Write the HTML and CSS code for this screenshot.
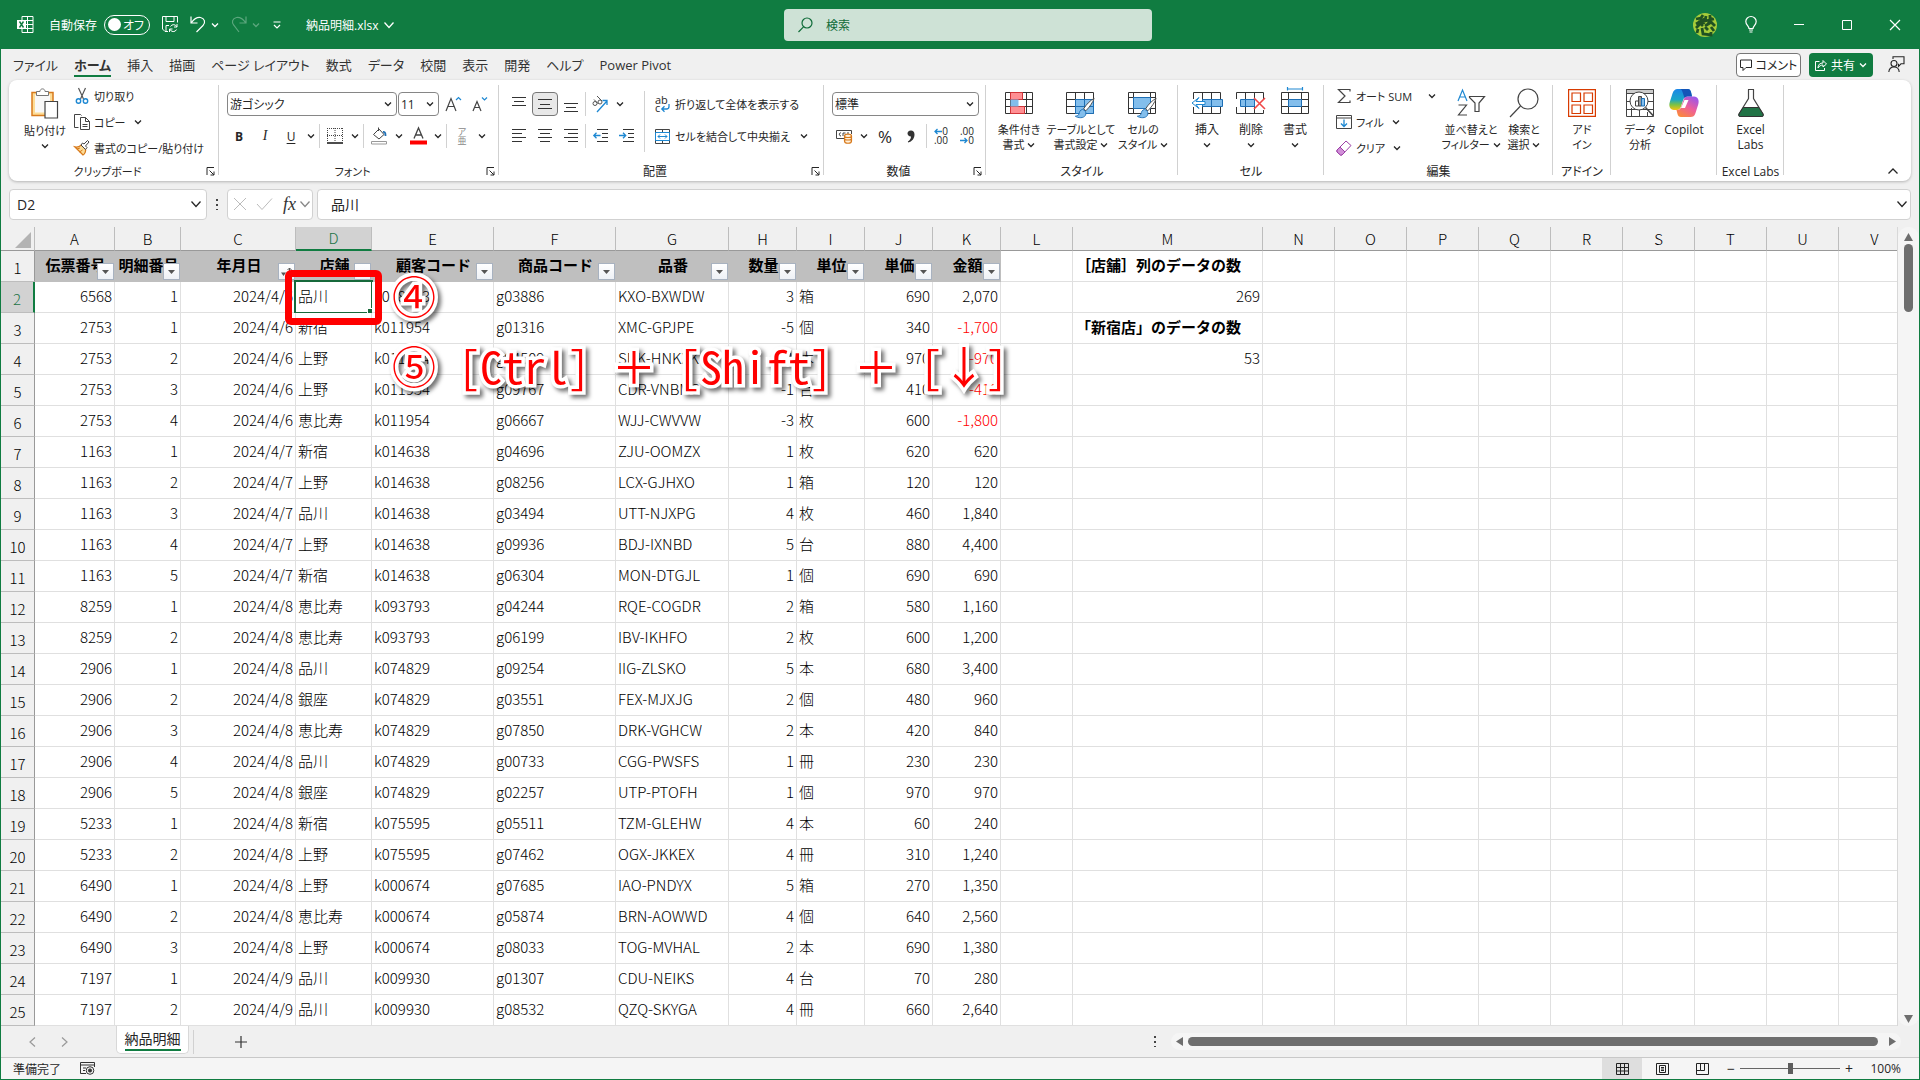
FILE: index.html
```html
<!DOCTYPE html>
<html lang="ja">
<head>
    <meta charset="UTF-8">
    <meta name="viewport" content="width=device-width, initial-scale=1.0">
    <title>納品明細.xlsx - Excel</title>
    <link rel="stylesheet" href="styles.css">
</head>
<body>
    <!-- Shared icon shapes -->
    <svg class="sprite" aria-hidden="true">
        <symbol id="chev" viewBox="0 0 8 8"><path d="M1 2.5 4 5.5 7 2.5" fill="none" stroke="currentColor" stroke-width="1.3"/></symbol>
        <symbol id="chev-big" viewBox="0 0 10 10"><path d="M.5 2.5 5 7.5 9.5 2.5" fill="none" stroke="currentColor" stroke-width="1.3"/></symbol>
        <symbol id="launcher" viewBox="0 0 9 9"><path d="M1 8V.5H8M3.5 3.5 8 8M8 4.5V8H4.5" fill="none" stroke="currentColor"/></symbol>
        <symbol id="brush" viewBox="0 0 24 24"><path d="M22.5 1.5c-4 2-9 7-11.500 11.500l2.500 2c4-4 7.500-9 9-13.500z" fill="#fff" stroke="#444"/><path d="M10 13.500c-3 .5-3.500 3-4 5-.5 1.500-2 2-4 2.500 3 2 9 2.500 11-1 1-2 .500-3.500-.500-5z" fill="#83beec" stroke="#1e6fb5"/></symbol>
    </svg>

    <div class="window">
        <header class="titlebar">
            <div class="title-left">
                <svg class="logo" width="17" height="17" viewBox="0 0 17 17"><path d="M5 .5h11v16H5zM5 4.500h11M5 8.500h11M5 12.500h11M10.500 .5v16" fill="none" stroke="#fff"/><path d="M0 4h9v9H0z" fill="#fff"/><path d="M2.500 5.500l4 6M6.500 5.500l-4 6" stroke="#107c41" stroke-width="1.400"/></svg>
                <label class="autosave" for="autosave">自動保存</label>
                <span class="toggle"><input type="checkbox" id="autosave"><span class="knob"></span><span>オフ</span></span>
                <button class="tool save" aria-label="保存"><svg width="16" height="17" viewBox="0 0 16 17" fill="none" stroke="currentColor"><path d="M6 15.500H3L.5 13V.5h15v6M4 .5v5h8v-5M4 15.500v-6h3M15 8v3h-3M7.500 16v-3h3M14.800 10.800a3.500 3.500 0 0 0-6.300-.3M8 13.300a3.500 3.500 0 0 0 6.500.2"/></svg></button>
                <button class="tool undo" aria-label="元に戻す"><svg width="16" height="17" viewBox="0 0 16 17" fill="none" stroke="currentColor" stroke-width="1.200"><path d="M1 .5v6.500h6.500M1.500 6.500C4 3 7 1 10.500 1.500c4 .7 5.500 5 2.500 8l-6.500 6.500"/></svg><svg class="chev"><use href="#chev"/></svg></button>
                <button class="tool redo" aria-label="やり直し" disabled><svg width="16" height="17" viewBox="0 0 16 17" fill="none" stroke="currentColor" stroke-width="1.200"><path d="M15 .5v6.500H8.500M14.500 6.500C12 3 9 1 5.500 1.500c-4 .7-5.500 5-2.500 8l5 6.500"/></svg><svg class="chev"><use href="#chev"/></svg></button>
                <button class="tool customize" aria-label="クイック アクセス"><svg width="8" height="8" viewBox="0 0 8 8" fill="none" stroke="currentColor" stroke-width="1.200"><path d="M.5 1h7M1 4l3 3 3-3"/></svg></button>
                <button class="filename">納品明細.xlsx <svg class="chev-big"><use href="#chev-big"/></svg></button>
            </div>
            <label class="search">
                <svg width="15" height="16" viewBox="0 0 15 16" fill="none" stroke="#0e6b38" stroke-width="1.200"><circle cx="9" cy="6" r="5"/><path d="M5.500 9.800.5 15"/></svg>
                <input type="text" placeholder="検索" aria-label="検索">
            </label>
            <div class="title-right">
                <svg class="avatar" width="24" height="24" viewBox="0 0 24 24"><circle cx="12" cy="12" r="12" fill="#a6cc3a"/><path d="M3 6l5-1 2-3M3 11l7-4 1 4M8 4v6l-5 5M13 3l-1 5 9-2M17 2v8l-5 3M18 9l4 4M5 16l-1 4M9 15l1 6 8 1v-3M12 14l3 3M18 14l3 4M5 8l5 5M20 5l-6 7" stroke="#1f5122" stroke-width="2.800" fill="none"/></svg>
                <button aria-label="ヒント"><svg width="12" height="17" viewBox="0 0 12 17" fill="none" stroke="currentColor" stroke-width="1.200"><path d="M4 12.500C4 10 .8 9 .8 5.500a5.200 5 0 0 1 10.400 0C11.200 9 8 10 8 12.500zM4 14h4M4.500 16h3"/></svg></button>
                <button aria-label="最小化"><svg width="10" height="10" viewBox="0 0 10 10"><path d="M0 4.500h10" stroke="currentColor"/></svg></button>
                <button aria-label="最大化"><svg width="10" height="10" viewBox="0 0 10 10"><path d="M.5 .5h9v9h-9z" fill="none" stroke="currentColor"/></svg></button>
                <button aria-label="閉じる"><svg width="10" height="10" viewBox="0 0 10 10"><path d="M0 0l10 10M10 0 0 10" stroke="currentColor" stroke-width="1.200"/></svg></button>
            </div>
        </header>

        <nav class="tabs">
            <a href="#">ファイル</a>
            <a href="#" class="active">ホーム</a>
            <a href="#">挿入</a>
            <a href="#">描画</a>
            <a href="#">ページ レイアウト</a>
            <a href="#">数式</a>
            <a href="#">データ</a>
            <a href="#">校閲</a>
            <a href="#">表示</a>
            <a href="#">開発</a>
            <a href="#">ヘルプ</a>
            <a href="#">Power Pivot</a>
            <div class="tab-actions">
                <button class="comment"><svg width="12" height="12" viewBox="0 0 12 12" fill="none" stroke="currentColor"><path d="M.5 1h11v7.500H6l-3 3v-3H.5z"/></svg>コメント</button>
                <button class="share"><svg width="12" height="12" viewBox="0 0 12 12" fill="none" stroke="currentColor"><path d="M4.500 2.500h-4v9h9V9M3 9c0-3.500 2-5 5-5V1.500l3.500 3.500L8 8V6C6 6 4 7 3 9z"/></svg>共有<svg class="chev"><use href="#chev"/></svg></button>
                <button class="person" aria-label="発表"><svg width="17" height="17" viewBox="0 0 17 17" fill="none" stroke="currentColor" stroke-width="1.100"><circle cx="6" cy="7.500" r="3"/><path d="M.8 16c.3-3 2.200-5 5.200-5s5 2 5.200 5M5 3V.8h11v7h-3l-2.500 2.500V7.800"/></svg></button>
            </div>
        </nav>

        <section class="ribbon">
            <div class="group g-clipboard">
                <div class="row">
                    <button class="big paste">
                        <svg width="28" height="31" viewBox="0 0 28 31"><path d="M1 4.500h21v23H1z" fill="#fddc96" stroke="#d87a1c" stroke-width="1.500"/><path d="M4 6.500h15v18H4z" fill="#f8f8f8"/><path d="M5.500 7.500v-4H9C9 0 14 0 14 3.500h3.500v4z" fill="#fff" stroke="#777"/><path d="M14 13.500h12.500v16.500H14z" fill="#fff" stroke="#444" stroke-width="1.200"/></svg>
                        <span>貼り付け</span><svg class="chev"><use href="#chev"/></svg>
                    </button>
                    <div class="stack">
                        <button class="small"><svg width="16" height="16" viewBox="0 0 16 16" fill="none"><path d="M4.500 0l5 11M11.500 0l-5 11" stroke="#555" stroke-width="1.200"/><circle cx="4.500" cy="13" r="2.200" stroke="#1e88d2" stroke-width="1.400"/><circle cx="11.500" cy="13" r="2.200" stroke="#1e88d2" stroke-width="1.400"/></svg>切り取り</button>
                        <button class="small"><svg width="16" height="16" viewBox="0 0 16 16" fill="none" stroke="#444"><path d="M4.500 13.500H.5V.5h6l1 1M6.500 3.500h5l4 4v8h-9zM11.500 3.500v4h4M8.500 10.500h5M8.500 12.500h5"/></svg>コピー<svg class="chev"><use href="#chev"/></svg></button>
                        <button class="small"><svg width="16" height="16" viewBox="0 0 16 16"><path d="M1 7l8 8c2-1 3-4 2.500-6L7.500 5C5 7 3 7.500 1 7z" fill="#fddc96" stroke="#d87a1c" stroke-width="1.300"/><path d="M3 9l3-1M5.500 12l3-2" stroke="#d87a1c"/><path d="M7 5l4.500 4.500 1.500-2L11.500 6 15 2l-1.500-1.500L10 4 8.500 3z" fill="#fff" stroke="#444"/></svg>書式のコピー/貼り付け</button>
                    </div>
                </div>
                <div class="foot"><span>クリップボード</span><button aria-label="クリップボード"><svg><use href="#launcher"/></svg></button></div>
            </div>

            <div class="group g-font">
                <div class="lines">
                    <div class="line">
                        <span class="pick font-name"><select aria-label="フォント"><option>游ゴシック</option></select><svg class="chev"><use href="#chev"/></svg></span>
                        <span class="pick font-size"><select aria-label="サイズ"><option>11</option></select><svg class="chev"><use href="#chev"/></svg></span>
                        <button class="ib grow" aria-label="拡大"><svg width="18" height="18" viewBox="0 0 18 18" fill="none" stroke="#444" stroke-width="1.200"><path d="M1 16 6 3.500 11 16M2.800 11.500h6.400"/><path d="M11 5l2.500-2.500L16 5" stroke="#1e88d2"/></svg></button>
                        <button class="ib" aria-label="縮小"><svg width="18" height="18" viewBox="0 0 18 18" fill="none" stroke="#444" stroke-width="1.200"><path d="M2 16 6 6.500 10 16M3.500 12.500h5"/><path d="M11 2.500l2.500 2.500L16 2.500" stroke="#1e88d2"/></svg></button>
                    </div>
                    <div class="line">
                        <button class="ib bold">B</button><button class="ib italic">I</button><button class="ib underline">U</button><button class="dd"><svg class="chev"><use href="#chev"/></svg></button>
                        <i class="sep"></i>
                        <button class="ib" aria-label="罫線"><svg width="16" height="16" viewBox="0 0 16 16" fill="none" stroke="#444"><path d="M.5 0v14M15.500 0v14M8 0v14M0 .5h16M0 7.500h16" stroke-dasharray="1 1"/><path d="M0 15h16" stroke="#111" stroke-width="1.500"/></svg></button><button class="dd"><svg class="chev"><use href="#chev"/></svg></button>
                        <i class="sep"></i>
                        <button class="ib" aria-label="塗りつぶし"><svg width="17" height="18" viewBox="0 0 17 18" fill="none"><path d="M2.500 7.500 8 2l5 5.500-5 4.500zM7.500 4V.5" stroke="#444"/><path d="M12 5c2.500-.5 2.500 2 2.500 4" stroke="#1e6fb5" stroke-width="1.800"/><path d="M.5 14.500h15v2.500H.5z" stroke="#999"/></svg></button><button class="dd"><svg class="chev"><use href="#chev"/></svg></button>
                        <button class="ib" aria-label="文字色"><svg width="17" height="18" viewBox="0 0 17 18" fill="none"><path d="M4 11.500 8.500 1 13 11.500M5.500 8h6" stroke="#444" stroke-width="1.300"/><path d="M0 13.500h17v4H0z" fill="#f00"/></svg></button><button class="dd"><svg class="chev"><use href="#chev"/></svg></button>
                        <i class="sep"></i>
                        <button class="ib ruby" aria-label="ふりがな"><span>ア</span><span>亜</span></button><button class="dd"><svg class="chev"><use href="#chev"/></svg></button>
                    </div>
                </div>
                <div class="foot"><span>フォント</span><button aria-label="フォント"><svg><use href="#launcher"/></svg></button></div>
            </div>

            <div class="group g-align">
                <div class="row">
                    <div class="lines">
                        <div class="line">
                            <button class="ib" aria-label="上揃え"><svg width="14" height="16" viewBox="0 0 14 16" stroke="#333"><path d="M0 1.500h14M2 5.500h10M0 9.500h14"/></svg></button>
                            <button class="ib on" aria-label="上下中央揃え"><svg width="14" height="16" viewBox="0 0 14 16" stroke="#333"><path d="M0 3.500h14M2 8.500h10M0 12.500h14"/></svg></button>
                            <button class="ib" aria-label="下揃え"><svg width="14" height="16" viewBox="0 0 14 16" stroke="#333"><path d="M0 7.500h14M2 11.500h10M0 15.500h14"/></svg></button>
                            <i class="sep"></i>
                            <button class="ib" aria-label="方向"><svg width="18" height="18" viewBox="0 0 18 18" fill="none" stroke="#555"><circle cx="4" cy="8.500" r="2"/><path d="M3 4.500 7.500 9M6 1l5 5"/><circle cx="9" cy="7" r="2"/><path d="M6 17 16 6M11.500 5.500H16V10" stroke="#1e88d2" stroke-width="1.300"/></svg></button><button class="dd"><svg class="chev"><use href="#chev"/></svg></button>
                        </div>
                        <div class="line">
                            <button class="ib" aria-label="左揃え"><svg width="14" height="14" viewBox="0 0 14 14" stroke="#333"><path d="M0 .5h14M0 4.500h10M0 8.500h14M0 12.500h10"/></svg></button>
                            <button class="ib" aria-label="中央揃え"><svg width="14" height="14" viewBox="0 0 14 14" stroke="#333"><path d="M0 .5h14M2 4.500h10M0 8.500h14M2 12.500h10"/></svg></button>
                            <button class="ib" aria-label="右揃え"><svg width="14" height="14" viewBox="0 0 14 14" stroke="#333"><path d="M0 .5h14M4 4.500h10M0 8.500h14M4 12.500h10"/></svg></button>
                            <i class="sep"></i>
                            <button class="ib" aria-label="インデントを減らす"><svg width="15" height="14" viewBox="0 0 15 14" fill="none" stroke="#333"><path d="M4 .5h11M9 4.500h6M9 8.500h6M4 12.500h11"/><path d="M7.500 6.500H.8M3.500 3.800.8 6.500l2.700 2.700" stroke="#1e88d2" stroke-width="1.300"/></svg></button>
                            <button class="ib" aria-label="インデントを増やす"><svg width="15" height="14" viewBox="0 0 15 14" fill="none" stroke="#333"><path d="M4 .5h11M9 4.500h6M9 8.500h6M4 12.500h11"/><path d="M0 6.500h6.700M4 3.800l2.700 2.700L4 9.200" stroke="#1e88d2" stroke-width="1.300"/></svg></button>
                        </div>
                    </div>
                    <i class="sep tall"></i>
                    <div class="lines wide">
                        <button class="line labelled"><span class="wrap-icon"><span>ab</span><span>c</span><svg width="9" height="8" viewBox="0 0 9 8" fill="none" stroke="#1e88d2" stroke-width="1.300"><path d="M8 0v2.500Q8 5 5.500 5H1M3.500 2.200.8 5l2.700 2.700"/></svg></span>折り返して全体を表示する</button>
                        <button class="line labelled"><svg width="15" height="15" viewBox="0 0 15 15" fill="none" stroke="#444"><path d="M.5 .5h14v14H.5zM7.500 .5V3M7.500 12v2.500"/><path d="M.5 3.500h14v8H.5zM3 7.500h9M5 5.500l-2 2 2 2M10 5.500l2 2-2 2" stroke="#1e88d2"/></svg>セルを結合して中央揃え<svg class="chev"><use href="#chev"/></svg></button>
                    </div>
                </div>
                <div class="foot"><span>配置</span><button aria-label="配置"><svg><use href="#launcher"/></svg></button></div>
            </div>

            <div class="group g-number">
                <div class="lines">
                    <div class="line">
                        <span class="pick number-format"><select aria-label="表示形式"><option>標準</option></select><svg class="chev"><use href="#chev"/></svg></span>
                    </div>
                    <div class="line">
                        <button class="ib" aria-label="通貨"><svg width="17" height="16" viewBox="0 0 17 16" fill="none"><path d="M8 10.500H.5v-8h15V6M5 5C3 4 2.500 8 5 8M7 8V5h2.500M11 5h2" stroke="#444"/><path d="M8.500 8v5c0 3 7 3 7 0V8c0-2.500-7-2.500-7 0zM8.500 8c0 2 7 2 7 0M8.500 10.500c0 2 7 2 7 0" fill="#fff1dc" stroke="#d87a1c" stroke-width="1.200"/></svg></button><button class="dd"><svg class="chev"><use href="#chev"/></svg></button>
                        <button class="ib pct">%</button>
                        <button class="ib comma" aria-label="桁区切り"><svg width="8" height="13" viewBox="0 0 8 13"><path d="M4 .5C1.500 .5 .5 2 .5 3.500S1.800 6.500 4 6.500C4 9 2.500 10.500 .8 11.500l.5 1C5 11.500 7.500 8.500 7.500 4.500 7.500 2 6 .5 4 .5z" fill="#333"/></svg></button>
                        <i class="sep"></i>
                        <button class="ib decimals" aria-label="小数点以下の表示桁数を増やす"><span><svg width="8" height="7" viewBox="0 0 8 7" fill="none" stroke="#1e88d2" stroke-width="1.300"><path d="M8 3.500H1M3.500 1 1 3.500 3.500 6"/></svg>0</span><span>.00</span></button>
                        <button class="ib decimals" aria-label="小数点以下の表示桁数を減らす"><span>.00</span><span><svg width="8" height="7" viewBox="0 0 8 7" fill="none" stroke="#1e88d2" stroke-width="1.300"><path d="M0 3.500h7M4.500 1 7 3.500 4.500 6"/></svg>0</span></button>
                    </div>
                </div>
                <div class="foot"><span>数値</span><button aria-label="数値"><svg><use href="#launcher"/></svg></button></div>
            </div>

            <div class="group g-style">
                <div class="row">
                    <button class="big">
                        <svg width="28" height="30" viewBox="0 0 28 30" fill="none" stroke="#333"><path d="M.5 4.500h27v21H.5zM5.500 4.500v21M21.500 4.500v21M.5 11.500h27M.5 18.500h27"/><path d="M5.500 4.500h12v7h-12zM5.500 18.500h14v7h-14z" fill="#ff8f93" stroke="#d13438"/><path d="M5.500 11.500h8v7h-8z" fill="#83beec" stroke="none"/></svg>
                        <span>条件付き<br>書式 <svg class="chev"><use href="#chev"/></svg></span>
                    </button>
                    <button class="big wide-label">
                        <svg width="30" height="30" viewBox="0 0 30 30" fill="none" stroke="#333"><path d="M.5 4.500h27v21H.5zM9.500 4.500v21M18.500 4.500v21M.5 11.500h27M.5 18.500h27"/><path d="M9.500 11.500h18v14h-18z" fill="#83beec" stroke="#1e6fb5"/><path d="M18.500 11.500v14M9.500 18.500h18" stroke="#1e6fb5"/><use href="#brush" x="7" y="9" width="23" height="22"/></svg>
                        <span>テーブルとして<br>書式設定 <svg class="chev"><use href="#chev"/></svg></span>
                    </button>
                    <button class="big">
                        <svg width="30" height="30" viewBox="0 0 30 30" fill="none" stroke="#333"><path d="M.5 4.500h27v21H.5zM5.500 4.500v21M22.500 4.500v21M.5 9.500h27M.5 20.500h27"/><path d="M5.500 9.500h17v11h-17z" fill="#83beec" stroke="#1e6fb5"/><use href="#brush" x="7" y="9" width="23" height="22"/></svg>
                        <span>セルの<br>スタイル <svg class="chev"><use href="#chev"/></svg></span>
                    </button>
                </div>
                <div class="foot"><span>スタイル</span></div>
            </div>

            <div class="group g-cells">
                <div class="row">
                    <button class="big">
                        <svg width="32" height="30" viewBox="0 0 32 30" fill="none" stroke="#333"><path d="M2.500 11V4.500h27V11M2.500 19v6.500h27V19M11.500 4.500v21M20.500 4.500v21"/><path d="M11.500 11.500h20v7h-20zM20.500 11.500v7" fill="#83beec" stroke="#1e6fb5"/><path d="M14 13.500H5l3-4-7 5.500 7 5.500-3-4h9z" fill="#fff" stroke="#1e88d2"/></svg>
                        <span>挿入</span><svg class="chev"><use href="#chev"/></svg>
                    </button>
                    <button class="big">
                        <svg width="30" height="30" viewBox="0 0 30 30" fill="none" stroke="#333"><path d="M.5 11V4.500h27V11M.5 19v6.500h27V22M9.500 4.500v21M18.500 4.500v21"/><path d="M4.500 11.500h14v7h-14zM9.500 11.500v7" fill="#83beec" stroke="#1e6fb5"/><path d="M18 10l11 11M29 10 18 21" stroke="#f04848" stroke-width="1.600"/></svg>
                        <span>削除</span><svg class="chev"><use href="#chev"/></svg>
                    </button>
                    <button class="big">
                        <svg width="28" height="30" viewBox="0 0 28 30" fill="none" stroke="#333"><path d="M.5 4.500h27v21H.5zM7.500 4.500v21M20.500 4.500v21M.5 11.500h27M.5 18.500h27"/><path d="M7.500 11.500h13v7h-13z" fill="#83beec" stroke="#1e6fb5"/><path d="M6.500 1h15M6.500 -1v3.500M21.500 -1v3.500" stroke="#1e88d2" stroke-width="1.200"/></svg>
                        <span>書式</span><svg class="chev"><use href="#chev"/></svg>
                    </button>
                </div>
                <div class="foot"><span>セル</span></div>
            </div>

            <div class="group g-edit">
                <div class="row">
                    <div class="stack">
                        <button class="small"><svg width="16" height="16" viewBox="0 0 16 16" fill="none" stroke="#444" stroke-width="1.200"><path d="M14 3.500V1.500H2.500L9 8l-6.500 6.500H14v-2"/></svg>オート SUM<svg class="chev sum"><use href="#chev"/></svg></button>
                        <button class="small"><svg width="16" height="16" viewBox="0 0 16 16" fill="none" stroke="#444"><path d="M.5 1.500h15v13H.5zM.5 4h15"/><path d="M8 5.500v7M5 9.500l3 3 3-3" stroke="#1e88d2" stroke-width="1.300"/></svg>フィル<svg class="chev"><use href="#chev"/></svg></button>
                        <button class="small"><svg width="16" height="16" viewBox="0 0 16 16"><path d="M1 10 10 1l5 4.500-9 9.500H4.500L1 12z" fill="#fff" stroke="#9b3fa5"/><path d="M1 10l3-3 5 5-3 3H4.500L1 12z" fill="#d18fd8" stroke="#9b3fa5"/></svg>クリア<svg class="chev"><use href="#chev"/></svg></button>
                    </div>
                    <button class="big sort">
                        <svg width="30" height="30" viewBox="0 0 30 30" fill="none" stroke="#444" stroke-width="1.200"><path d="M2 13 6.500 2 11 13M3.500 9h6" stroke="#1e88d2"/><path d="M2.500 17h8l-8 10h8.500M13.500 8.500h15L23 15v8.500h-4V15L13.500 9.500z"/></svg>
                        <span>並べ替えと<br>フィルター <svg class="chev"><use href="#chev"/></svg></span>
                    </button>
                    <button class="big find">
                        <svg width="30" height="30" viewBox="0 0 30 30" fill="none" stroke="#444" stroke-width="1.200"><circle cx="19" cy="11" r="10"/><path d="M11.500 18 1 29"/></svg>
                        <span>検索と<br>選択 <svg class="chev"><use href="#chev"/></svg></span>
                    </button>
                </div>
                <div class="foot"><span>編集</span></div>
            </div>

            <div class="group g-addin">
                <div class="row">
                    <button class="big">
                        <svg width="28" height="30" viewBox="0 0 28 30" fill="none" stroke="#d83b01" stroke-width="1.200"><path d="M.6 1.600h26.800v26.800H.6zM4 5h8.500v8.500H4zM16 5h8.500v8.500H16zM4 17h8.500v8.500H4zM16 17h8.500v8.500H16z"/></svg>
                        <span>アド<br>イン</span>
                    </button>
                </div>
                <div class="foot"><span>アドイン</span></div>
            </div>

            <div class="group g-data">
                <div class="row">
                    <button class="big">
                        <svg width="28" height="30" viewBox="0 0 28 30" fill="none" stroke="#444"><path d="M.5 1.500h27v4H.5z" fill="#ccc"/><path d="M.5 1.500h27v27H.5zM.5 13.500h5M22 13.500h5M.5 21.500h27M5.500 20v8M13.500 22v6M21.500 24v4"/><circle cx="13" cy="13" r="9" fill="#fff"/><path d="M9.500 13h3v5h-3z"/><path d="M12.500 8.500h3V18h-3z" fill="#999"/><path d="M15.500 10.500h3V18h-3z" fill="#83beec" stroke="#1e6fb5"/><path d="M19.500 19.500l8 8.500" stroke-width="1.600"/></svg>
                        <span>データ<br>分析</span>
                    </button>
                    <button class="big copilot">
                        <svg width="30" height="30" viewBox="0 0 30 30">
                            <defs>
                                <linearGradient id="cp1" x1="0" y1="0" x2="0" y2="1"><stop offset="0" stop-color="#1b86e8"/><stop offset=".5" stop-color="#1aa6c8"/><stop offset=".75" stop-color="#7cc244"/><stop offset="1" stop-color="#f5c211"/></linearGradient>
                                <linearGradient id="cp2" x1=".8" y1="0" x2=".2" y2="1"><stop offset="0" stop-color="#9a57ec"/><stop offset=".5" stop-color="#ee5f9a"/><stop offset="1" stop-color="#fb8a3a"/></linearGradient>
                            </defs>
                            <path d="M8.500 1h10.500c2 0 2.500 1.500 3 3l1 4.500h-4c-3 0-4 1-5 4l-2 6c-.8 2.500-2 3.500-4 3.500H5C1 22-.5 18 .8 14L3.500 5.500C4.500 2.500 6 1 8.500 1z" fill="url(#cp1)"/>
                            <path d="M18.500 1c2.500 0 3 1.500 3.500 3l1 4.500h-4c-1.500 0-2.500.5-3.500 1.500L13.500 4c-.5-2-1.500-3-3-3z" fill="#1455b8"/>
                            <path d="M21.500 29H12c-2 0-3-1-3.500-3L7.500 22c3 0 4-1 5-4l2-6c.8-2.500 2-3.500 4.500-3.500h6c4 0 5.500 4 4.200 8l-2.700 8.500c-1 3-2.500 4-5 4z" fill="url(#cp2)"/>
                            <path d="M15.500 12h4l-3.500 8h-4z" fill="#fff"/>
                        </svg>
                        <span>Copilot</span>
                    </button>
                </div>
                <div class="foot"></div>
            </div>

            <div class="group g-labs">
                <div class="row">
                    <button class="big">
                        <svg width="26" height="30" viewBox="0 0 26 30"><path d="M10 1.500h6M10.500 1.500v9L1 26c-.5 1.500 0 2.500 1.500 2.500h21c1.500 0 2-1 1.500-2.500l-9.500-15.500v-9" fill="#fff" stroke="#444" stroke-width="1.200"/><path d="M5.200 19.500h15.600L25 26c.5 1.500 0 2.500-1.500 2.500h-21C1 28.500.5 27.500 1 26z" fill="#217346" stroke="#333"/></svg>
                        <span>Excel<br>Labs</span>
                    </button>
                </div>
                <div class="foot"><span>Excel Labs</span></div>
            </div>
            <button class="collapse" aria-label="リボンを折りたたむ"><svg width="10" height="10" viewBox="0 0 10 10"><path d="M.5 7.500 5 3l4.500 4.500" fill="none" stroke="currentColor" stroke-width="1.300"/></svg></button>
        </section>

        <div class="formula-bar">
            <label class="name-box"><input type="text" value="D2" aria-label="名前ボックス"><svg class="chev-big"><use href="#chev-big"/></svg></label>
            <span class="dots"></span>
            <div class="fx-box">
                <svg width="12" height="12" viewBox="0 0 12 12" fill="none" stroke="#bbb"><path d="M0 0l12 12M12 0 0 12"/></svg>
                <svg width="15" height="12" viewBox="0 0 15 12" fill="none" stroke="#bbb"><path d="M0 6l5 5.500L15 .5"/></svg>
                <button class="fx">fx</button>
                <svg class="chev-big"><use href="#chev-big"/></svg>
            </div>
            <label class="formula"><input type="text" value="品川" aria-label="数式"><svg class="chev-big"><use href="#chev-big"/></svg></label>
        </div>

        <main class="sheet-area">
            <div class="grid-wrap">
                <table class="grid">
                    <colgroup id="cols"></colgroup>
                    <thead><tr id="letters"></tr></thead>
                    <tbody id="rows"></tbody>
                </table>
            </div>
            <div class="vscroll">
                <svg width="9" height="8" viewBox="0 0 9 8"><path d="M4.500 0 9 8H0z" fill="#6e6e6e"/></svg>
                <span class="thumb"></span>
                <svg class="down" width="9" height="8" viewBox="0 0 9 8"><path d="M4.500 8 9 0H0z" fill="#6e6e6e"/></svg>
            </div>
        </main>

        <div class="sheet-tabs">
            <button class="nav-btn" aria-label="前のシート"><svg width="7" height="10" viewBox="0 0 7 10"><path d="M6 .5 1 5l5 4.500" fill="none" stroke="#999" stroke-width="1.200"/></svg></button>
            <button class="nav-btn" aria-label="次のシート"><svg width="7" height="10" viewBox="0 0 7 10"><path d="M1 .5 6 5 1 9.500" fill="none" stroke="#999" stroke-width="1.200"/></svg></button>
            <button class="sheet-tab"><span>納品明細</span></button>
            <i class="sep"></i>
            <button class="add-sheet" aria-label="新しいシート"><svg width="12" height="12" viewBox="0 0 12 12"><path d="M6 0v12M0 6h12" stroke="#333" stroke-width="1.200"/></svg></button>
            <span class="dots"></span>
            <div class="hscroll">
                <svg width="7" height="9" viewBox="0 0 7 9"><path d="M7 0v9L0 4.500z" fill="#6e6e6e"/></svg>
                <span class="thumb"></span>
                <svg width="7" height="9" viewBox="0 0 7 9"><path d="M0 0v9l7-4.500z" fill="#6e6e6e"/></svg>
            </div>
        </div>

        <footer class="status">
            <span>準備完了</span>
            <svg class="macro" width="15" height="13" viewBox="0 0 15 13" fill="none" stroke="#333"><path d="M6 11.500H.5V.5h14V5M.5 3h14M3 6h3M3 8.500h2"/><circle cx="10" cy="8.500" r="3.800"/><circle cx="10" cy="8.500" r="1.600" fill="#333"/></svg>
            <div class="views">
                <button class="on" aria-label="標準"><svg width="13" height="12" viewBox="0 0 13 12" fill="none" stroke="#222"><path d="M.5 .5h12v11H.5zM4.500 .5v11M8.500 .5v11M.5 4.500h12M.5 8h12"/></svg></button>
                <button aria-label="ページ レイアウト"><svg width="13" height="12" viewBox="0 0 13 12" fill="none" stroke="#222"><path d="M.5 .5h12v11H.5zM3.500 2.500h6v7h-6zM5 4.500h3M5 6h3M5 7.500h3"/></svg></button>
                <button aria-label="改ページ プレビュー"><svg width="13" height="12" viewBox="0 0 13 12" fill="none" stroke="#222"><path d="M.5 .5h12v11H.5zM4.500 .5V7.500H.5M8.500 .5v7h-4"/></svg></button>
            </div>
            <button class="zoom-btn">−</button>
            <input type="range" class="zoom" min="0" max="200" value="100" aria-label="ズーム">
            <button class="zoom-btn">+</button>
            <button class="percent">100%</button>
        </footer>
    </div>

    <script src="script.js"></script>
</body>
</html>
```
FILE: styles.css
```css
* {
    box-sizing: border-box;
}
body {
    margin: 0;
    background: #f0f0f0;
    color: #262626;
    font-family: "Open Sans", "Noto Sans CJK JP", sans-serif;
    font-size: 12px;
    font-feature-settings: "palt";
    overflow: hidden;
}
button, input, select {
    font: inherit;
    font-feature-settings: inherit;
    color: inherit;
    border: 0;
    padding: 0;
    margin: 0;
    background: none;
    outline: none;
}
button {
    display: inline-flex;
    align-items: center;
    justify-content: center;
    white-space: nowrap;
}
svg {
    flex: none;
    overflow: visible;
}
.sprite {
    position: absolute;
    width: 0;
    height: 0;
}
.chev {
    width: 8px;
    height: 8px;
}
.chev-big {
    width: 10px;
    height: 10px;
}
.window {
    display: flex;
    flex-direction: column;
    min-height: 100vh;
    border: 1px solid #107c41;
    border-top: 0;
}

/* Title bar */
.titlebar {
    display: grid;
    grid-template-columns: 1fr 368px 1fr;
    align-items: center;
    height: 49px;
    padding: 0 0 8px 16px;
    background: #107c41;
    color: #fff;
}
.title-left, .title-right {
    display: flex;
    align-items: center;
    padding-top: 8px;
}
.autosave {
    margin-left: 15px;
}
.toggle {
    position: relative;
    display: flex;
    align-items: center;
    justify-content: space-between;
    width: 46px;
    height: 20px;
    margin-left: 7px;
    padding: 0 5px 0 3px;
    border: 1px solid #fff;
    border-radius: 10px;
}
.toggle input {
    position: absolute;
    inset: 0;
    opacity: 0;
}
.knob {
    width: 13px;
    height: 13px;
    border-radius: 50%;
    background: #fff;
}
.tool {
    gap: 5px;
    margin-left: 12px;
}
.redo {
    color: #5ba67d;
}
.customize {
    margin-left: 13px;
}
.filename {
    gap: 6px;
    margin-left: 25px;
}
.search {
    display: flex;
    align-items: center;
    gap: 13px;
    height: 32px;
    margin-top: 9px;
    padding-left: 14px;
    border-radius: 4px;
    background: #cee2d6;
}
.search input {
    flex: 1;
}
.search input::placeholder {
    color: #0e6b38;
    opacity: 1;
}
.title-right {
    justify-content: flex-end;
}
.title-right button {
    width: 48px;
}
.avatar {
    margin-right: 10px;
}

/* Ribbon tabs */
.tabs {
    display: flex;
    height: 31px;
    gap: 16px;
    padding-left: 12px;
    font-size: 13px;
}
.tabs a {
    display: flex;
    align-items: center;
    height: 28px;
    padding-top: 3px;
    color: #333;
    text-decoration: none;
    white-space: nowrap;
}
.tabs .active {
    padding-top: 5px;
    border-bottom: 2px solid #107c41;
    font-weight: bold;
}
.tab-actions {
    display: flex;
    align-items: center;
    margin-left: auto;
    font-size: 12px;
}
.comment, .share {
    height: 24px;
    border-radius: 4px;
    gap: 4px;
}
.comment {
    width: 65px;
    border: 1px solid #777;
    background: #fff;
}
.share {
    width: 64px;
    margin-left: 8px;
    background: #107c41;
    color: #fff;
}
.person {
    margin: 0 14px 0 15px;
}

/* Ribbon */
.ribbon {
    display: flex;
    height: 101px;
    margin: 0 8px;
    border-radius: 8px;
    background: #fff;
    box-shadow: 0 1px 3px rgba(0, 0, 0, 0.25);
}
.group {
    display: flex;
    flex: none;
    flex-direction: column;
    justify-content: space-between;
    padding: 5px 0 1px;
    background: linear-gradient(#d1d1d1, #d1d1d1) right 5px / 1px 90px no-repeat;
}
.g-clipboard { width: 210px; }
.g-font { width: 280px; }
.g-align { width: 325px; }
.g-number { width: 162px; }
.g-style { width: 192px; }
.g-cells { width: 146px; }
.g-edit { width: 229px; }
.g-addin { width: 58px; }
.g-data { width: 106px; }
.g-labs { width: 67px; }
.row {
    display: flex;
}
.foot {
    display: flex;
    align-items: center;
    justify-content: center;
    height: 18px;
    white-space: nowrap;
}
.foot span {
    flex: 1;
    text-align: center;
}
.foot button {
    width: 9px;
    margin-right: 4px;
}
.foot button svg {
    width: 9px;
    height: 9px;
}
.g-clipboard .foot, .g-font .foot {
    font-size: 11px;
}
.big {
    flex-direction: column;
    justify-content: flex-start;
    width: 44px;
    padding-top: 3px;
    font-size: 11px;
    line-height: 15px;
}
.g-cells .big, .g-labs .big, .copilot {
    font-size: 12px;
}
.big > span {
    margin-top: 4px;
}
.paste {
    width: 58px;
    margin-left: 7px;
}
.big > .chev {
    margin-top: 4px;
}
.stack {
    display: flex;
    flex-direction: column;
    align-items: flex-start;
    gap: 6px;
    padding-top: 1px;
}
.small {
    height: 20px;
    gap: 4px;
    font-size: 11px;
}
.small .chev {
    margin-left: 4px;
}
.small .sum {
    margin-left: 12px;
}
.lines {
    display: flex;
    flex-direction: column;
    gap: 8px;
    padding: 7px 0 0 7px;
}
.line {
    display: flex;
    align-items: center;
    height: 24px;
}
.pick {
    display: flex;
    align-items: center;
    height: 24px;
    padding: 0 4px 0 2px;
    border: 1px solid #868686;
    border-radius: 4px;
}
.pick select {
    flex: 1;
    min-width: 0;
    appearance: none;
}
.font-name { width: 170px; margin-left: 1px; }
.font-size { width: 41px; margin-left: 1px; }
.number-format { width: 147px; margin-left: 1px; }
.ib {
    width: 26px;
    height: 24px;
}
.grow {
    margin-left: 2px;
}
.dd {
    width: 13px;
    height: 24px;
}
.sep {
    width: 1px;
    height: 24px;
    margin: 0 2px;
    background: #d1d1d1;
}
.g-align .sep {
    margin: 0 1px;
}
.bold {
    font-weight: bold;
}
.italic {
    font-family: "Liberation Serif", serif;
    font-size: 14px;
    font-style: italic;
}
.underline {
    text-decoration: underline;
    text-underline-offset: 2px;
}
.ruby {
    flex-direction: column;
    color: #888;
    font-size: 9px;
    line-height: 9px;
}
.on {
    border-radius: 4px;
    background: #e8e8e8;
}
.ib.on {
    border: 1px solid #777;
}
.g-align .tall {
    height: 61px;
    margin: 6px 0 0 5px;
}
.wide {
    padding-left: 10px;
}
.labelled {
    justify-content: flex-start;
    gap: 5px;
    font-size: 11px;
}
.labelled .chev {
    margin-left: 5px;
}
.wrap-icon {
    display: grid;
    grid-template-columns: 6px 9px;
    font-size: 11px;
    line-height: 8px;
    text-align: left;
}
.wrap-icon span:first-child {
    grid-column: 1 / 3;
}
.pct {
    margin-left: 2px;
    font-size: 17px;
}
.decimals {
    flex-direction: column;
    align-items: flex-end;
    padding-right: 7px;
    font-size: 10px;
    line-height: 9px;
}
.decimals span {
    display: flex;
    align-items: center;
}
.g-style .row {
    padding-left: 10px;
}
.g-style .big {
    width: 46px;
}
.g-style .wide-label {
    width: 78px;
}
.g-cells .row {
    padding-left: 7px;
}
.g-edit .row {
    padding-left: 12px;
}
.g-edit .stack {
    width: 105px;
}
.g-edit .sort {
    width: 60px;
}
.g-edit .find {
    width: 46px;
}
.g-addin .row, .g-labs .row {
    justify-content: center;
}
.g-data .row {
    padding-left: 7px;
}
.collapse {
    align-self: flex-end;
    margin: 0 13px 5px auto;
}

/* Formula bar */
.formula-bar {
    display: flex;
    align-items: center;
    height: 46px;
    padding: 0 8px;
}
.name-box, .fx-box, .formula {
    display: flex;
    align-items: center;
    height: 31px;
    border: 1px solid #d1d1d1;
    border-radius: 4px;
    background: #fff;
}
.name-box {
    width: 198px;
    padding: 0 5px 0 7px;
    font-size: 14px;
}
.name-box input, .formula input {
    flex: 1;
    min-width: 0;
}
.dots {
    width: 2px;
    height: 11px;
    margin: 0 9px;
    background: repeating-linear-gradient(#444 0 2px, transparent 2px 5px);
}
.fx-box {
    width: 86px;
    gap: 11px;
    padding-left: 6px;
    color: #888;
}
.fx {
    margin-right: -7px;
    color: #333;
    font: italic 18px "Liberation Serif", serif;
}
.formula {
    flex: 1;
    margin-left: 4px;
    padding: 0 3px 0 13px;
    font-size: 14px;
}

/* Grid */
.sheet-area {
    display: flex;
    height: 799px;
}
.grid-wrap {
    flex: 1;
    min-width: 0;
    overflow: hidden;
    border-right: 1px solid #d8d8d8;
}
.grid {
    width: 1876px;
    border-collapse: separate;
    border-spacing: 0;
    table-layout: fixed;
    color: #000;
    font-family: "Noto Sans CJK JP", sans-serif;
    font-size: 15px;
    font-weight: 300;
    font-feature-settings: normal;
    line-height: 22px;
}
.grid th, .grid td {
    padding: 0;
    font-weight: 300;
    white-space: nowrap;
}
.grid thead th {
    height: 24px;
    border-right: 1px solid #bdbdbd;
    border-bottom: 1px solid #999;
    background: #f0f0f0;
}
.grid thead .current {
    border-bottom: 2px solid #107c41;
    background: #d2d2d2;
    color: #217346;
}
.corner svg {
    display: block;
    margin: 3px 3px 0 auto;
}
.grid tbody th {
    height: 31px;
    padding-top: 4px;
    border-right: 1px solid #999;
    border-bottom: 1px solid #bdbdbd;
    background: #f0f0f0;
}
.grid tbody .current {
    border-right: 2px solid #107c41;
    background: #d2d2d2;
    color: #217346;
}
.grid td {
    position: relative;
    height: 31px;
    padding: 0 2px 2px;
    border-right: 1px solid #e0e0e0;
    border-bottom: 1px solid #e0e0e0;
    background: #fff;
}
.grid .num {
    text-align: right;
}
.grid .minus {
    color: #f00;
}
.grid .strong {
    padding: 0 3px 3px;
    font-weight: bold;
}
.grid .head {
    padding: 0 1px 3px 3px;
    border-color: #bfbfbf;
    background: #bfbfbf;
    font-weight: bold;
    text-align: center;
    overflow: hidden;
}
.filter {
    position: absolute;
    right: 0;
    bottom: 1px;
    width: 17px;
    height: 17px;
    border: 1px solid #a8b2c0;
    background: linear-gradient(#fff, #eef1f6);
}

/* Selected cell with the numbered steps drawn over the sheet */
.cursor {
    position: absolute;
    inset: -2px;
    border: 2px solid #17693b;
}
.cursor::after {
    content: "";
    position: absolute;
    right: -3px;
    bottom: -3px;
    width: 6px;
    height: 6px;
    border: solid #fff;
    border-width: 1px 0 0 1px;
    background: #17693b;
}
.frame {
    position: absolute;
    inset: -12px -11px -13px;
    z-index: 2;
    border: 7px solid #f00;
    border-radius: 6px;
}
.step {
    position: absolute;
    left: 96px;
    z-index: 3;
    display: flex;
    align-items: center;
    gap: 22px;
    color: #f00;
    font-size: 44px;
    font-weight: 400;
    font-feature-settings: "hwid";
    line-height: 48px;
    -webkit-text-stroke: 7px #fff;
    paint-order: stroke fill;
    filter: drop-shadow(3px 3px 2px rgba(0, 0, 0, 0.55));
}
.step4 {
    top: -11px;
}
.step5 {
    top: 59px;
}
.plus {
    font-feature-settings: normal;
}

/* Scroll bars */
.vscroll {
    display: flex;
    flex-direction: column;
    align-items: center;
    width: 21px;
    padding: 6px 1px 3px 0;
    border-radius: 10px;
    background: #f5f5f5;
}
.thumb {
    border-radius: 5px;
    background: #6e6e6e;
}
.vscroll .thumb {
    width: 9px;
    height: 68px;
    margin-top: 3px;
}
.vscroll .down {
    margin-top: auto;
}
.hscroll {
    display: flex;
    align-items: center;
    gap: 5px;
    width: 730px;
    height: 17px;
    margin-right: 18px;
    padding: 0 5px;
    border-radius: 9px;
    background: #f5f5f5;
}
.hscroll .thumb {
    flex: 1;
    height: 9px;
    margin-right: 6px;
}

/* Sheet tabs */
.sheet-tabs {
    display: flex;
    align-items: center;
    height: 32px;
    padding-left: 15px;
    border-bottom: 1px solid #c8c8c8;
}
.nav-btn {
    width: 32px;
}
.sheet-tab {
    align-self: flex-start;
    width: 73px;
    height: 28px;
    margin-left: 36px;
    border: 1px solid #d8d8d8;
    border-top: 0;
    border-radius: 0 0 5px 5px;
    background: #fff;
    font-size: 14px;
    line-height: 20px;
}
.sheet-tab span {
    border-bottom: 2px solid #107c41;
}
.sheet-tabs .sep {
    margin-left: 4px;
}
.add-sheet {
    width: 90px;
}
.sheet-tabs .dots {
    margin: 0 15px 0 auto;
}

/* Status bar */
.status {
    display: flex;
    align-items: center;
    height: 21px;
    padding: 0 18px 0 12px;
    background: #f5f5f5;
}
.macro {
    margin-left: 19px;
}
.views {
    display: flex;
    align-self: stretch;
    margin-left: auto;
}
.views button {
    width: 40px;
}
.views .on {
    border-radius: 0;
    background: #dedede;
}
.zoom-btn {
    width: 18px;
    font-size: 14px;
}
.zoom {
    width: 100px;
    height: 20px;
    appearance: none;
    background: linear-gradient(#666, #666) center / 100% 1px no-repeat;
}
.zoom::-webkit-slider-thumb {
    appearance: none;
    width: 5px;
    height: 11px;
    background: #5e5e5e;
}
.percent {
    width: 43px;
    justify-content: flex-end;
}
```
FILE: script.js
```js
const widths = [34, 80, 66, 115, 76, 122, 122, 113, 68, 68, 68, 68, 72, 190, 72, 72, 72, 72, 72, 72, 72, 72, 72];
const letters = 'ABCDEFGHIJKLMNOPQRSTUV'.split('');
const heads = ['伝票番号', '明細番号', '年月日', '店舗', '顧客コード', '商品コード', '品番', '数量', '単位', '単価', '金額'];
const numeric = [0, 1, 2, 7, 9, 10];

const data = `6568 1 2024/4/6 品川 k018293 g03886 KXO-BXWDW 3 箱 690 2,070
2753 1 2024/4/6 新宿 k011954 g01316 XMC-GPJPE -5 個 340 -1,700
2753 2 2024/4/6 上野 k011954 g04509 SDK-HNKXK -1 本 970 -970
2753 3 2024/4/6 上野 k011954 g09767 CDR-VNBMS -1 台 410 -410
2753 4 2024/4/6 恵比寿 k011954 g06667 WJJ-CWVVW -3 枚 600 -1,800
1163 1 2024/4/7 新宿 k014638 g04696 ZJU-OOMZX 1 枚 620 620
1163 2 2024/4/7 上野 k014638 g08256 LCX-GJHXO 1 箱 120 120
1163 3 2024/4/7 品川 k014638 g03494 UTT-NJXPG 4 枚 460 1,840
1163 4 2024/4/7 上野 k014638 g09936 BDJ-IXNBD 5 台 880 4,400
1163 5 2024/4/7 新宿 k014638 g06304 MON-DTGJL 1 個 690 690
8259 1 2024/4/8 恵比寿 k093793 g04244 RQE-COGDR 2 箱 580 1,160
8259 2 2024/4/8 恵比寿 k093793 g06199 IBV-IKHFO 2 枚 600 1,200
2906 1 2024/4/8 品川 k074829 g09254 IIG-ZLSKO 5 本 680 3,400
2906 2 2024/4/8 銀座 k074829 g03551 FEX-MJXJG 2 個 480 960
2906 3 2024/4/8 恵比寿 k074829 g07850 DRK-VGHCW 2 本 420 840
2906 4 2024/4/8 品川 k074829 g00733 CGG-PWSFS 1 冊 230 230
2906 5 2024/4/8 銀座 k074829 g02257 UTP-PTOFH 1 個 970 970
5233 1 2024/4/8 新宿 k075595 g05511 TZM-GLEHW 4 本 60 240
5233 2 2024/4/8 上野 k075595 g07462 OGX-JKKEX 4 冊 310 1,240
6490 1 2024/4/8 上野 k000674 g07685 IAO-PNDYX 5 箱 270 1,350
6490 2 2024/4/8 恵比寿 k000674 g05874 BRN-AOWWD 4 個 640 2,560
6490 3 2024/4/8 上野 k000674 g08033 TOG-MVHAL 2 本 690 1,380
7197 1 2024/4/9 品川 k009930 g01307 CDU-NEIKS 4 台 70 280
7197 2 2024/4/9 品川 k009930 g08532 QZQ-SKYGA 4 冊 660 2,640`.split('\n').map(line => line.split(' '));

// Column M holds the two counts
const notes = {
    1: ['strong', '［店舗］列のデータの数'],
    2: ['num', '269'],
    3: ['strong', '「新宿店」のデータの数'],
    4: ['num', '53']
};

const overlay = `<span class="cursor"></span><span class="frame"></span>
<span class="step step4">④</span>
<span class="step step5"><span>⑤</span><span>[Ctrl]</span><span class="plus">＋</span><span>[Shift]</span><span class="plus">＋</span><span>[↓]</span></span>`;

function filterButton(col) {
    const arrow = '<path d="M4 6h7l-3.500 4z" fill="#555"/>';
    const sorted = '<path d="M2 8.500h5L4.500 12z" fill="#555"/><path d="M10.500 12V4M8.500 6l2-2 2 2" fill="none" stroke="#555"/>';
    return `<button class="filter" aria-label="フィルター"><svg width="15" height="15" viewBox="0 0 15 15">${col === 2 ? sorted : arrow}</svg></button>`;
}

function cell(row, col) {
    if (row === 1 && col < 11) {
        return `<td class="head">${heads[col]}${filterButton(col)}</td>`;
    }
    if (col === 12 && notes[row]) {
        return `<td class="${notes[row][0]}">${notes[row][1]}</td>`;
    }
    if (row === 1 || col > 10) {
        return '<td></td>';
    }
    const value = data[row - 2][col];
    let cls = numeric.includes(col) ? 'num' : '';
    if (col === 10 && value[0] === '-') cls += ' minus';
    return `<td class="${cls}">${value}${row === 2 && col === 3 ? overlay : ''}</td>`;
}

document.getElementById('cols').innerHTML = widths.map(w => `<col style="width:${w}px">`).join('');
document.getElementById('letters').innerHTML =
    '<th class="corner"><svg width="16" height="16" viewBox="0 0 16 16"><path d="M16 0v16H0z" fill="#b3b3b3"/></svg></th>' +
    letters.map(l => `<th${l === 'D' ? ' class="current"' : ''}>${l}</th>`).join('');

let html = '';
for (let row = 1; row <= 25; row++) {
    html += `<tr><th${row === 2 ? ' class="current"' : ''}>${row}</th>`;
    html += letters.map((l, col) => cell(row, col)).join('');
    html += '</tr>';
}
document.getElementById('rows').innerHTML = html;
```
